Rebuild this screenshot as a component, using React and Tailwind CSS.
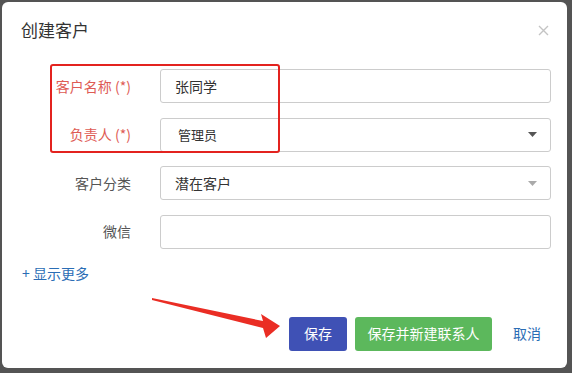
import React from 'react';

const labelCls = 'w-[129px] shrink-0 text-right text-[14px]';
const boxCls = 'ml-[29px] w-[391px] h-[34px] border border-[#cccccc] rounded-[3px] flex items-center justify-between text-[14px] text-[#333]';

const Caret = ({ color }) => (
    <svg width="9" height="5" viewBox="0 0 9 5" className="mr-[13px]">
        <path d="M0 0 L9 0 L4.5 5 Z" fill={color} />
    </svg>
);

const App = () => {
    return (
        <div
            className="relative w-[572px] h-[373px] overflow-hidden bg-[#545454]"
            style={{ fontFamily: '"Noto Sans CJK SC", "Noto Sans", sans-serif' }}
        >
            <div className="ml-[2px] mt-[2px] w-[565px] h-[366px] bg-white rounded-[6px] flex flex-col">
                {/* header */}
                <div className="h-[56px] flex items-center justify-between pl-[19px] pr-[18px]">
                    <h4 className="text-[17px] text-[#333] leading-[20px]">创建客户</h4>
                    <svg width="11" height="11" viewBox="0 0 11 11">
                        <path d="M1 1 L10 10 M10 1 L1 10" stroke="#c4c4c4" strokeWidth="1.4" />
                    </svg>
                </div>

                {/* form */}
                <div className="pt-[11px] flex flex-col gap-[14.5px]">
                    <div className="flex items-center">
                        <label className={`${labelCls} text-[#de5b55]`}>客户名称 (*)</label>
                        <div className={boxCls}>
                            <span className="pl-[14px]">张同学</span>
                        </div>
                    </div>
                    <div className="flex items-center">
                        <label className={`${labelCls} text-[#de5b55]`}>负责人 (*)</label>
                        <div className={boxCls}>
                            <span className="pl-[17px] text-[13px]">管理员</span>
                            <Caret color="#555" />
                        </div>
                    </div>
                    <div className="flex items-center">
                        <label className={`${labelCls} text-[#555]`}>客户分类</label>
                        <div className={boxCls}>
                            <span className="pl-[14px]">潜在客户</span>
                            <Caret color="#aaa" />
                        </div>
                    </div>
                    <div className="flex items-center">
                        <label className={`${labelCls} text-[#555]`}>微信</label>
                        <div className={boxCls}></div>
                    </div>
                </div>

                <div className="mt-[14px] pl-[20px] h-[20px] leading-[20px] text-[14px] text-[#2a6db5]">+ 显示更多</div>

                {/* footer */}
                <div className="mt-[34px] ml-[287px] flex items-center">
                    <button className="w-[58px] h-[34px] rounded-[3px] bg-[#3f51b5] text-white text-[14px]">保存</button>
                    <button className="ml-[8px] w-[137px] h-[34px] rounded-[3px] bg-[#5cb85c] text-white text-[14px]">保存并新建联系人</button>
                    <span className="ml-[21px] text-[14px] text-[#2a6db5]">取消</span>
                </div>
            </div>

            {/* annotations */}
            <div className="absolute left-[50px] top-[64px] w-[230px] h-[89px] border-[2.5px] border-[#e3231f] rounded-[3px]"></div>
            <svg className="absolute left-0 top-0" width="572" height="373" viewBox="0 0 572 373">
                <polygon
                    points="152,298 263,321 261,314 280,326 266,338 263,328 152,300"
                    fill="#ea2d24"
                />
            </svg>
        </div>
    );
};

export default App;
